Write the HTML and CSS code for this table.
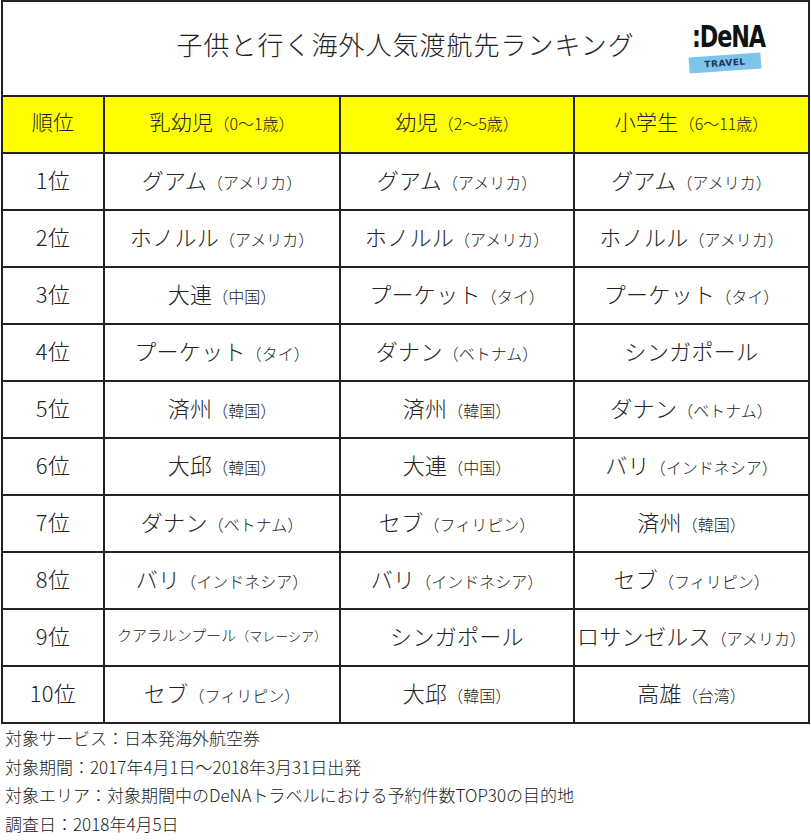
FILE: index.html
```html
<!DOCTYPE html>
<html lang="ja">
<head>
<meta charset="utf-8">
<link rel="stylesheet" href="styles.css">
</head>
<body>
<table class="rank">
  <colgroup>
    <col class="c0"><col class="c1"><col class="c2"><col class="c3">
  </colgroup>
  <tr class="title-row">
    <td colspan="4">
      <div class="title-wrap">
        <h1 class="title">子供と行く海外人気渡航先ランキング</h1>
        <div class="logo">
          <span class="logo-dena">:DeNA</span>
          <span class="logo-band">TRAVEL</span>
        </div>
      </div>
    </td>
  </tr>
  <tr class="head">
    <th>順位</th>
    <th>乳幼児<span class="s">（0～1歳）</span></th>
    <th>幼児<span class="s">（2～5歳）</span></th>
    <th>小学生<span class="s">（6～11歳）</span></th>
  </tr>
  <tr><td>1位</td><td>グアム<span class="s">（アメリカ）</span></td><td>グアム<span class="s">（アメリカ）</span></td><td>グアム<span class="s">（アメリカ）</span></td></tr>
  <tr><td>2位</td><td>ホノルル<span class="s">（アメリカ）</span></td><td>ホノルル<span class="s">（アメリカ）</span></td><td>ホノルル<span class="s">（アメリカ）</span></td></tr>
  <tr><td>3位</td><td>大連<span class="s">（中国）</span></td><td>プーケット<span class="s">（タイ）</span></td><td>プーケット<span class="s">（タイ）</span></td></tr>
  <tr><td>4位</td><td>プーケット<span class="s">（タイ）</span></td><td>ダナン<span class="s">（ベトナム）</span></td><td>シンガポール</td></tr>
  <tr><td>5位</td><td>済州<span class="s">（韓国）</span></td><td>済州<span class="s">（韓国）</span></td><td>ダナン<span class="s">（ベトナム）</span></td></tr>
  <tr><td>6位</td><td>大邱<span class="s">（韓国）</span></td><td>大連<span class="s">（中国）</span></td><td>バリ<span class="s">（インドネシア）</span></td></tr>
  <tr><td>7位</td><td>ダナン<span class="s">（ベトナム）</span></td><td>セブ<span class="s">（フィリピン）</span></td><td>済州<span class="s">（韓国）</span></td></tr>
  <tr><td>8位</td><td>バリ<span class="s">（インドネシア）</span></td><td>バリ<span class="s">（インドネシア）</span></td><td>セブ<span class="s">（フィリピン）</span></td></tr>
  <tr><td>9位</td><td class="small">クアラルンプール<span class="s">（マレーシア）</span></td><td>シンガポール</td><td>ロサンゼルス<span class="s">（アメリカ）</span></td></tr>
  <tr><td>10位</td><td>セブ<span class="s">（フィリピン）</span></td><td>大邱<span class="s">（韓国）</span></td><td>高雄<span class="s">（台湾）</span></td></tr>
</table>
<div class="notes">
  <p>対象サービス：日本発海外航空券</p>
  <p>対象期間：2017年4月1日～2018年3月31日出発</p>
  <p>対象エリア：対象期間中のDeNAトラベルにおける予約件数TOP30の目的地</p>
  <p>調査日：2018年4月5日</p>
</div>
</body>
</html>
```

FILE: styles.css
```css
html, body {
  margin: 0;
  padding: 0;
  background: #fff;
}
body {
  font-family: "Noto Sans CJK JP", "Noto Sans", sans-serif;
  font-weight: 300;
  color: #222;
  width: 811px;
}
.rank {
  border-collapse: collapse;
  margin-left: 1px;
  width: 807px;
  table-layout: fixed;
}
.c0 { width: 102px; }
.c1 { width: 236px; }
.c2 { width: 234px; }
.c3 { width: 235px; }
.rank td, .rank th {
  border: 2px solid #222;
  text-align: center;
  vertical-align: middle;
  padding: 0 0 6px 0;
  font-weight: 300;
  font-size: 22px;
  height: 49px;
  white-space: nowrap;
  line-height: 1;
  letter-spacing: 0.3px;
}
.rank .title-row td {
  height: 93px;
  padding: 0;
}
.title-wrap {
  position: relative;
  height: 93px;
  display: flex;
  align-items: center;
  justify-content: center;
}
.title {
  margin: 0 0 9px 0;
  font-size: 26px;
  font-weight: 300;
  letter-spacing: 1px;
}
.logo {
  position: absolute;
  left: 686px;
  top: 17px;
  width: 80px;
  height: 58px;
}
.logo-dena {
  display: block;
  font-family: "DejaVu Sans", sans-serif;
  font-weight: bold;
  font-size: 31px;
  letter-spacing: -1.5px;
  color: #111;
  line-height: 34px;
  text-align: left;
  padding-left: 4px;
  transform: scaleX(0.72);
  transform-origin: left center;
}
.logo-band {
  display: block;
  margin-top: 2px;
  width: 72px;
  height: 16px;
  background: #7cc4ea;
  color: #1d3557;
  font-family: "DejaVu Sans", sans-serif;
  font-weight: bold;
  font-size: 9px;
  line-height: 16px;
  text-align: center;
  letter-spacing: 0.5px;
  transform: rotate(-4deg);
}
.head th {
  background: #ffff00;
  font-size: 21px;
}
.s {
  font-size: 16px;
  letter-spacing: 0;
}
.rank td.small {
  font-size: 15px;
  letter-spacing: 0;
}
.rank td.small .s {
  font-size: 13px;
}
.notes {
  padding: 0 0 0 5px;
}
.notes p {
  margin: 0;
  font-size: 17px;
  line-height: 28.5px;
}
```
